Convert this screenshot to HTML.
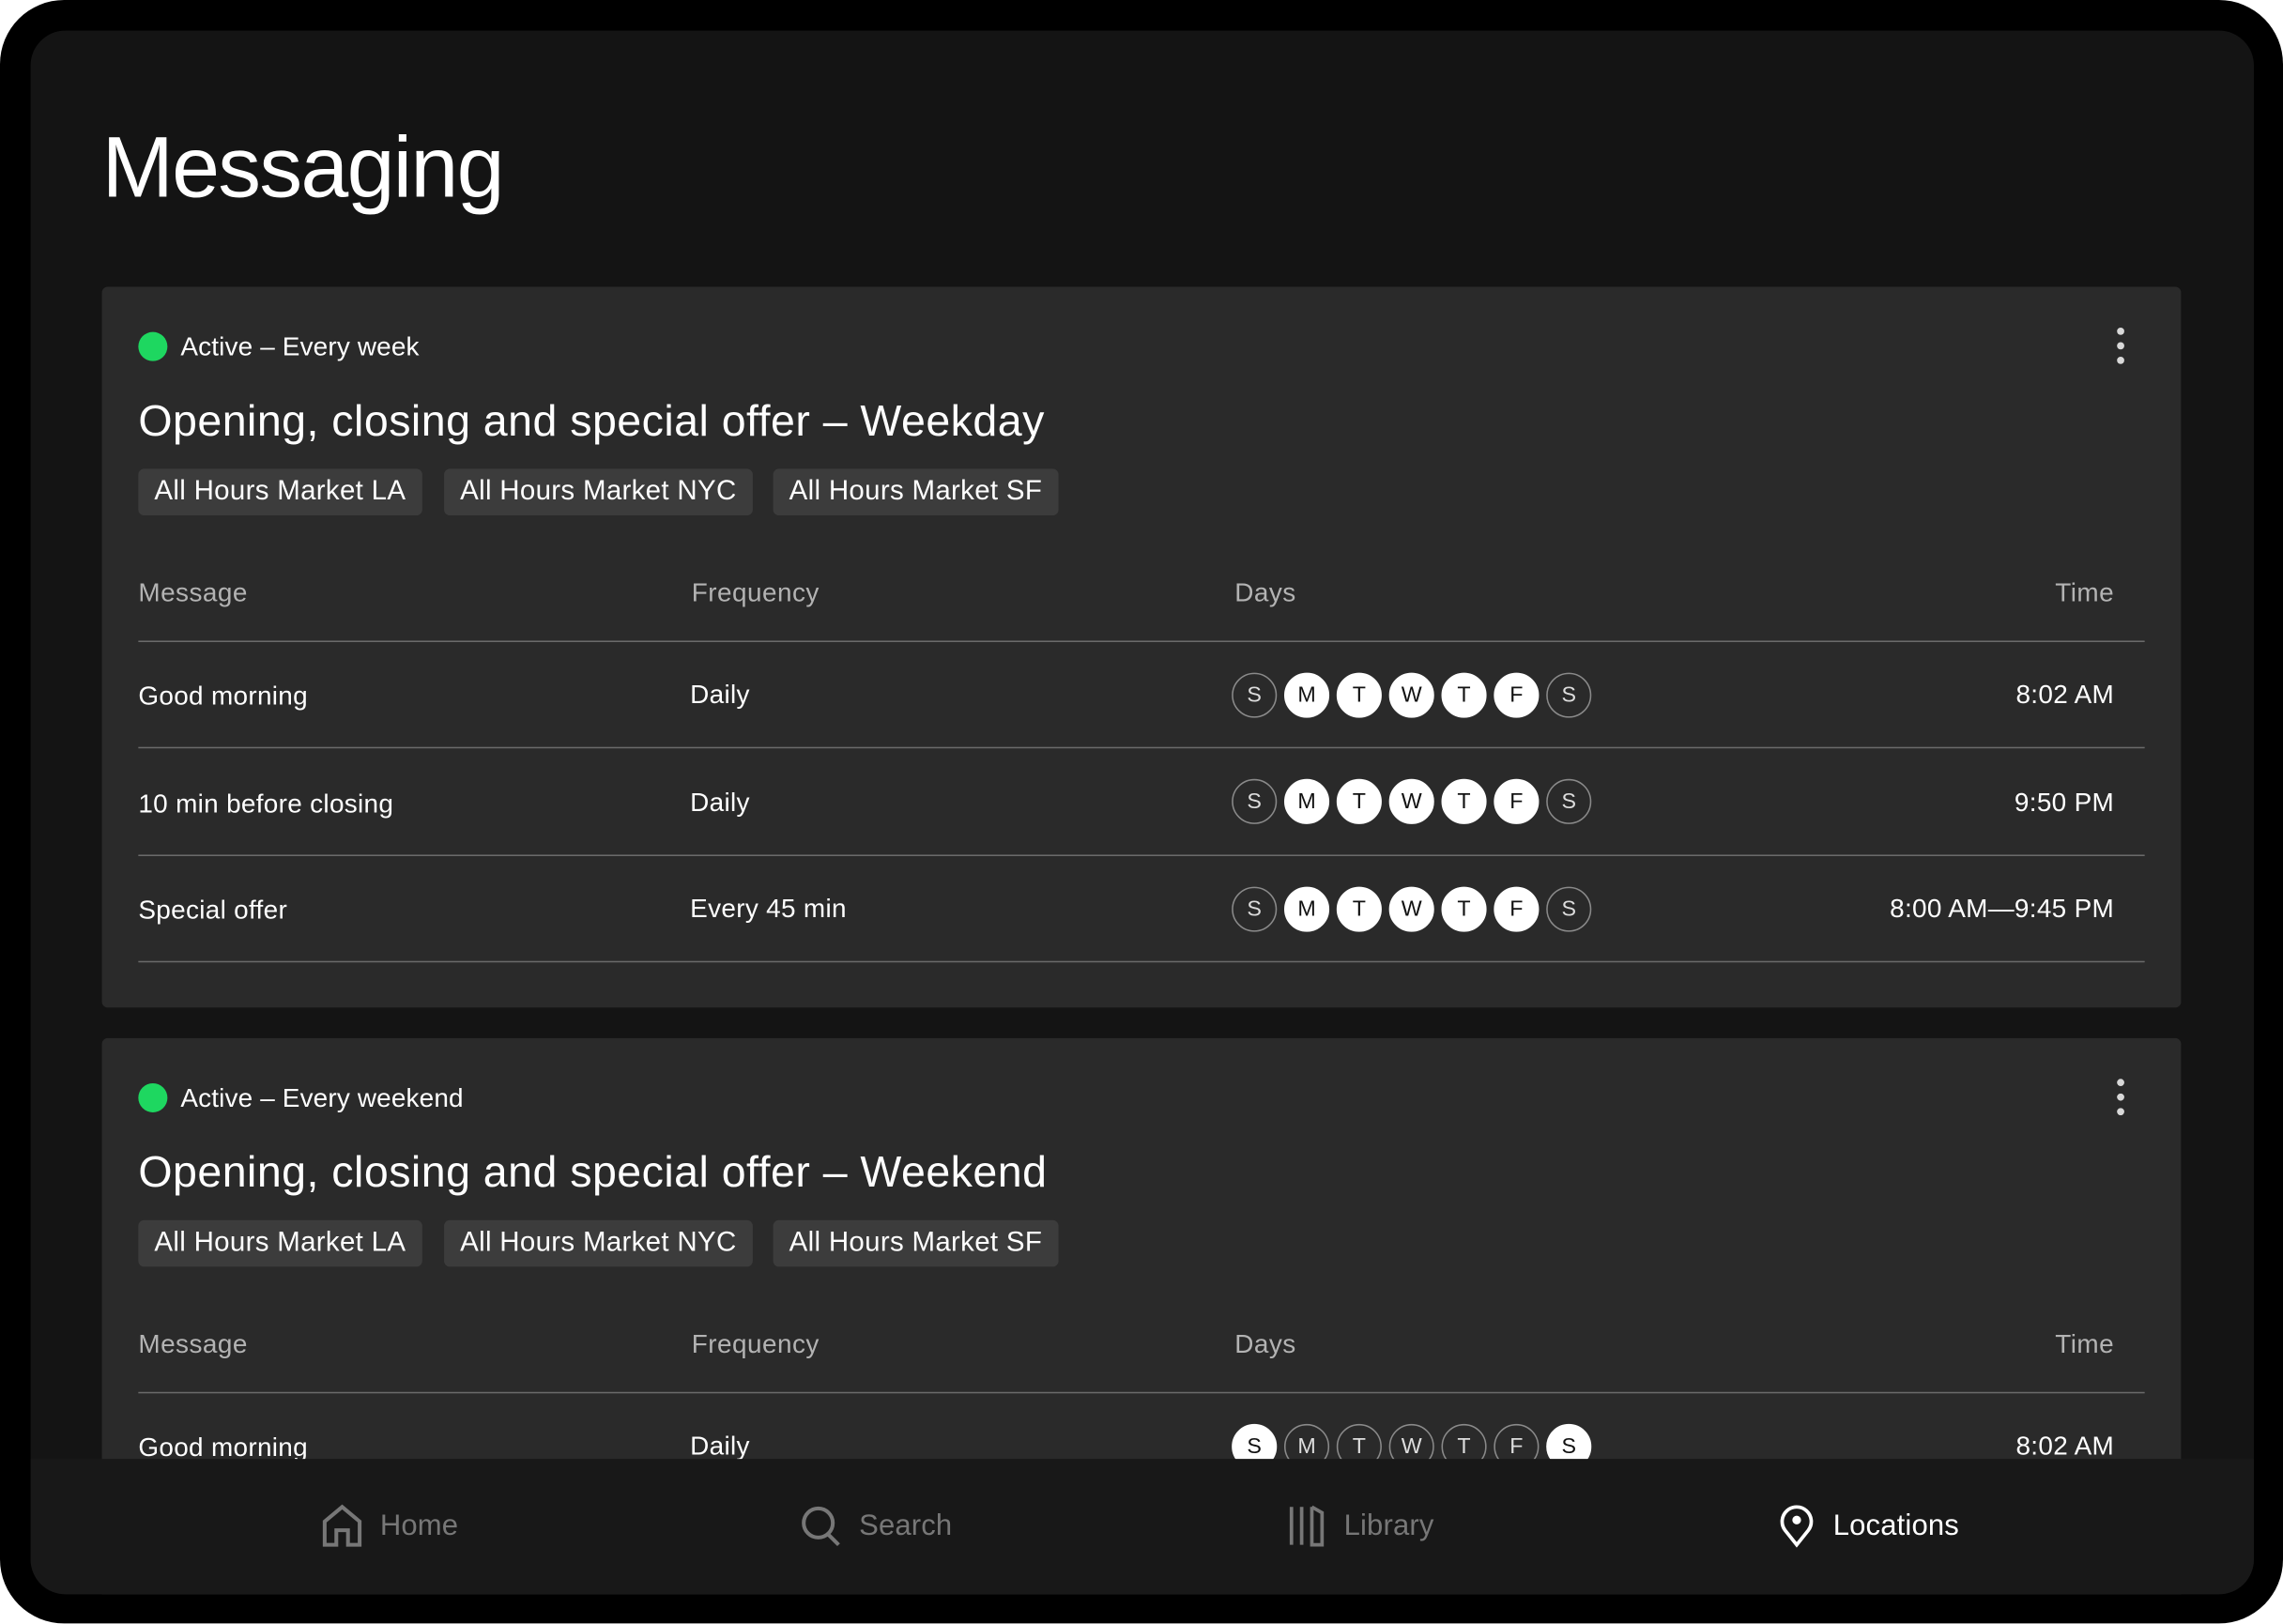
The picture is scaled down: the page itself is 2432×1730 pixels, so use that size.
<!DOCTYPE html>
<html><head><meta charset="utf-8"><style>
*{margin:0;padding:0;box-sizing:border-box}
html,body{width:2432px;height:1730px;overflow:hidden;background:#fff}
#s{position:absolute;left:0;top:0;width:1568px;height:1115px;transform:scale(1.55102);transform-origin:0 0;font-family:"Liberation Sans",sans-serif;color:#fff}
.dev{position:absolute;left:0;top:0;width:1568px;height:1115px;background:#000;border-radius:44px}
.pan{position:absolute;left:21px;top:21px;width:1527px;height:1074px;background:#141414;border-radius:24px;overflow:hidden}
.a{position:absolute;white-space:nowrap}
h1{position:absolute;left:49px;top:60px;font-size:59px;font-weight:400;letter-spacing:-1.1px}
.card{position:absolute;left:49px;width:1428px;background:#2a2a2a;border-radius:4px}
.dot{position:absolute;left:25px;width:20px;height:20px;border-radius:50%;background:#1ed760}
.st{font-size:18px;left:54px;letter-spacing:0.1px}
.tt{font-size:30px;left:25px;letter-spacing:0.3px}
.chip{position:absolute;height:32px;background:#3c3c3c;border-radius:4px;font-size:19px;line-height:32px;padding:0 11px;letter-spacing:0.2px}
.hd{font-size:18px;color:#b3b3b3;letter-spacing:0.3px}
.ln{position:absolute;left:25px;width:1378px;height:1px;background:#6a6a6a}
.tx{font-size:18px;letter-spacing:0.2px}
.r{right:46px;text-align:right}
.d{position:absolute;width:31px;height:31px;border-radius:50%;font-size:15px;text-align:center;line-height:29px;border:1px solid #8a8a8a;color:#ddd}
.d.on{background:#fff;color:#111;border-color:#fff}
.kb{position:absolute;left:1384px;width:5px;height:5px;border-radius:50%;background:#d8d8d8}
.nav{position:absolute;left:0;top:981px;width:1527px;height:93px;background:#181818}
.ni{position:absolute;top:31px;font-size:20px;color:#777;display:flex;align-items:center;gap:12px;letter-spacing:0.1px}
</style></head><body><div id="s"><div class="dev"></div><div class="pan">
<h1>Messaging</h1>

<div class="card" style="top:176px;height:495px">
<div class="dot" style="top:31px"></div><div class="a st" style="top:31px">Active – Every week</div>
<div class="kb" style="top:28px"></div><div class="kb" style="top:38px"></div><div class="kb" style="top:48px"></div>
<div class="a tt" style="top:76px">Opening, closing and special offer – Weekday</div>
<div class="chip" style="left:25px;top:125px">All Hours Market LA</div>
<div class="chip" style="left:235px;top:125px">All Hours Market NYC</div>
<div class="chip" style="left:461px;top:125px">All Hours Market SF</div>
<div class="a hd" style="left:25px;top:200px">Message</div>
<div class="a hd" style="left:405px;top:200px">Frequency</div>
<div class="a hd" style="left:778px;top:200px">Days</div>
<div class="a hd r" style="top:200px">Time</div>
<div class="ln" style="top:243px"></div>
<div class="a tx" style="left:25px;top:271px">Good morning</div><div class="a tx" style="left:404px;top:270px">Daily</div><div class="a tx r" style="top:270px">8:02 AM</div>
<div class="ln" style="top:316px"></div>
<div class="a tx" style="left:25px;top:345px">10 min before closing</div><div class="a tx" style="left:404px;top:344px">Daily</div><div class="a tx r" style="top:344px">9:50 PM</div>
<div class="ln" style="top:390px"></div>
<div class="a tx" style="left:25px;top:418px">Special offer</div><div class="a tx" style="left:404px;top:417px">Every 45 min</div><div class="a tx r" style="top:417px">8:00 AM—9:45 PM</div>
<div class="ln" style="top:463px"></div>
<div style="position:absolute;left:0;top:265px"><div class="d" style="left:776px">S</div><div class="d on" style="left:812px">M</div><div class="d on" style="left:848px">T</div><div class="d on" style="left:884px">W</div><div class="d on" style="left:920px">T</div><div class="d on" style="left:956px">F</div><div class="d" style="left:992px">S</div></div>
<div style="position:absolute;left:0;top:338px"><div class="d" style="left:776px">S</div><div class="d on" style="left:812px">M</div><div class="d on" style="left:848px">T</div><div class="d on" style="left:884px">W</div><div class="d on" style="left:920px">T</div><div class="d on" style="left:956px">F</div><div class="d" style="left:992px">S</div></div>
<div style="position:absolute;left:0;top:412px"><div class="d" style="left:776px">S</div><div class="d on" style="left:812px">M</div><div class="d on" style="left:848px">T</div><div class="d on" style="left:884px">W</div><div class="d on" style="left:920px">T</div><div class="d on" style="left:956px">F</div><div class="d" style="left:992px">S</div></div>
</div>

<div class="card" style="top:692px;height:400px">
<div class="dot" style="top:31px"></div><div class="a st" style="top:31px">Active – Every weekend</div>
<div class="kb" style="top:28px"></div><div class="kb" style="top:38px"></div><div class="kb" style="top:48px"></div>
<div class="a tt" style="top:76px">Opening, closing and special offer – Weekend</div>
<div class="chip" style="left:25px;top:125px">All Hours Market LA</div>
<div class="chip" style="left:235px;top:125px">All Hours Market NYC</div>
<div class="chip" style="left:461px;top:125px">All Hours Market SF</div>
<div class="a hd" style="left:25px;top:200px">Message</div>
<div class="a hd" style="left:405px;top:200px">Frequency</div>
<div class="a hd" style="left:778px;top:200px">Days</div>
<div class="a hd r" style="top:200px">Time</div>
<div class="ln" style="top:243px"></div>
<div class="a tx" style="left:25px;top:271px">Good morning</div><div class="a tx" style="left:404px;top:270px">Daily</div><div class="a tx r" style="top:270px">8:02 AM</div>
<div style="position:absolute;left:0;top:265px"><div class="d on" style="left:776px">S</div><div class="d" style="left:812px">M</div><div class="d" style="left:848px">T</div><div class="d" style="left:884px">W</div><div class="d" style="left:920px">T</div><div class="d" style="left:956px">F</div><div class="d on" style="left:992px">S</div></div>
</div>

<div class="nav">
<div class="ni" style="left:200px"><svg width="28" height="30" viewBox="0 0 28 30" fill="none" stroke="#777" stroke-width="2.6"><path d="M2 28V12L14 2L26 12V28H18V18H10V28Z"/></svg>Home</div>
<div class="ni" style="left:529px"><svg width="28" height="30" viewBox="0 0 28 30" fill="none" stroke="#777" stroke-width="2.6"><circle cx="12" cy="13" r="10"/><path d="M19 21L26 28"/></svg>Search</div>
<div class="ni" style="left:864px"><svg width="26" height="30" viewBox="0 0 26 30" fill="none" stroke="#777" stroke-width="2.4"><path d="M2 2V28M9 2V28M16 2V28H23V6L16 2"/></svg>Library</div>
<div class="ni" style="left:1200px;color:#fff"><svg width="26" height="30" viewBox="0 0 26 30" fill="none" stroke="#fff" stroke-width="2.4"><path d="M13 28L5 18A10 10 0 1 1 21 18Z"/><circle cx="13" cy="11" r="1.8" fill="#fff"/></svg>Locations</div>
</div>
</div></div></body></html>
